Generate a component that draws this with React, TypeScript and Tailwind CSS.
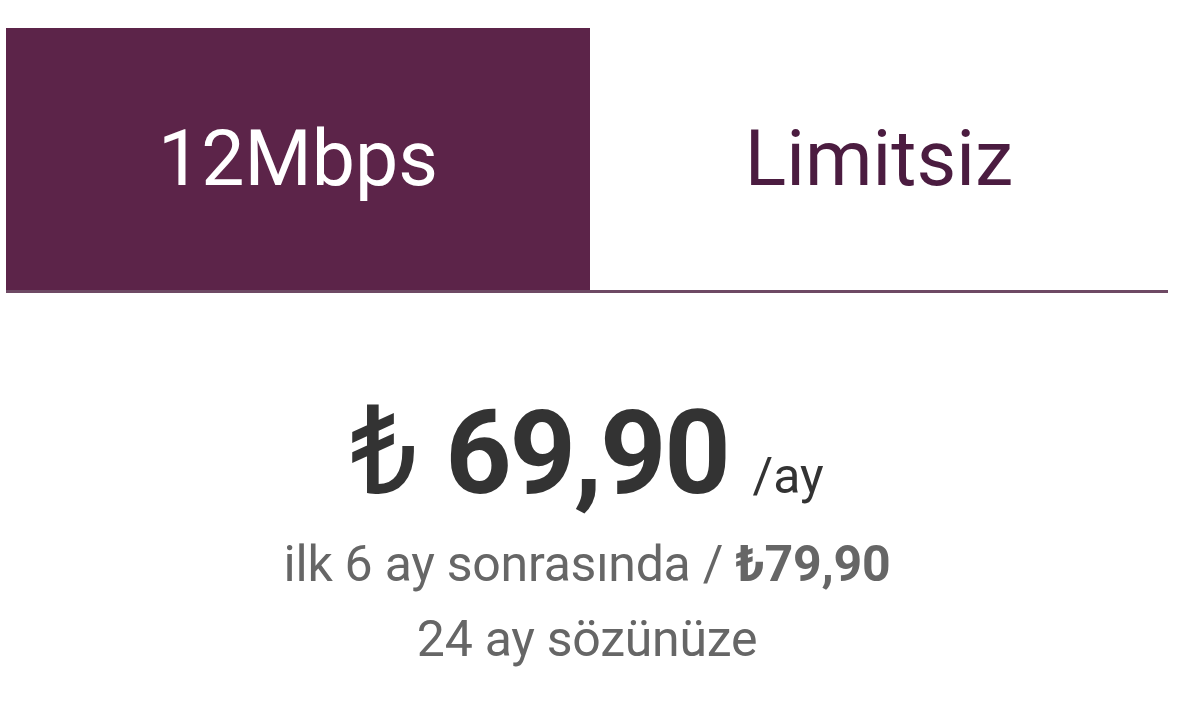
const tabs = [
  { label: "12Mbps", active: true },
  { label: "Limitsiz", active: false },
];

export default function App() {
  return (
    <div className="min-h-screen bg-white pt-[28px] font-['Roboto',sans-serif]">
      <div className="mx-[6px] w-[1162px]">
        <div className="flex border-b-[3px] border-[#6e4964]">
          {tabs.map((tab) => (
            <div
              key={tab.label}
              className={
                tab.active
                  ? "flex h-[262px] w-[584px] items-center justify-center bg-[#5c2449] text-[77px] text-white"
                  : "flex h-[262px] flex-1 items-center justify-center text-[77px] text-[#4b1c40]"
              }
            >
              <span className="leading-none">{tab.label}</span>
            </div>
          ))}
        </div>
        <div className="flex flex-col items-center pt-[96px]">
          <div className="flex items-baseline text-[#333333]">
            <span className="text-[124px] font-normal leading-none">₺</span>
            <span className="ml-[26px] text-[116px] font-bold leading-none tracking-[-0.02em]">
              69,90
            </span>
            <span className="ml-[24px] text-[50px] leading-none">/ay</span>
          </div>
          <p className="mt-[14px] text-center text-[50px] leading-[75px] tracking-[-0.005em] text-[#666666]">
            ilk 6 ay sonrasında / <span className="font-bold">₺79,90</span>
            <br />
            24 ay sözünüze
          </p>
        </div>
      </div>
    </div>
  );
}
